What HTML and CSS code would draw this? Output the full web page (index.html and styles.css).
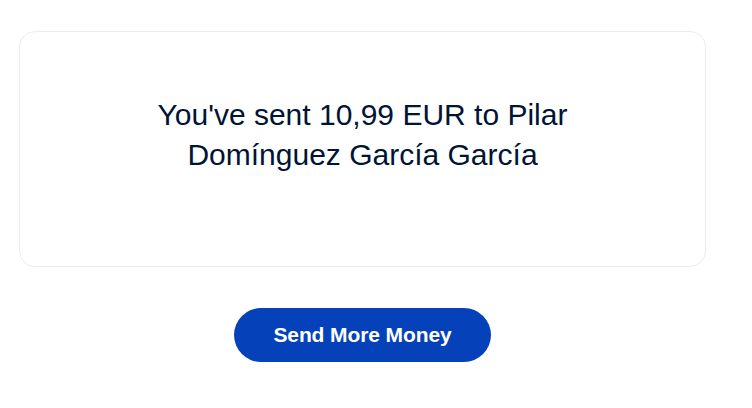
FILE: index.html
```html
<!DOCTYPE html>
<html>
<head>
<meta charset="utf-8">
<link rel="stylesheet" href="styles.css">
</head>
<body>
<main class="page">
  <section class="card">
    <p class="message">You've sent 10,99 EUR to Pilar Domínguez García García</p>
  </section>
  <div class="actions">
    <button class="btn-primary">Send More Money</button>
  </div>
</main>
</body>
</html>
```

FILE: styles.css
```css
html, body {
  margin: 0;
  padding: 0;
  background: #ffffff;
}
body {
  font-family: "Liberation Sans", Arial, sans-serif;
  color: #001435;
}
.page {
  width: 687px;
  margin-left: 19px;
  padding-top: 31px;
  display: flex;
  flex-direction: column;
  align-items: center;
}
.card {
  box-sizing: border-box;
  width: 100%;
  height: 236px;
  border: 1px solid #ededed;
  border-radius: 16px;
  display: flex;
  justify-content: center;
  padding-top: 63px;
}
.message {
  margin: 0;
  width: 460px;
  text-align: center;
  font-size: 30px;
  line-height: 40px;
}
.actions {
  margin-top: 41px;
  display: flex;
  justify-content: center;
}
.btn-primary {
  width: 257px;
  height: 54px;
  border: none;
  border-radius: 27px;
  background: #0541b9;
  color: #ffffff;
  font-family: "Liberation Sans", Arial, sans-serif;
  font-weight: bold;
  font-size: 21px;
  letter-spacing: -0.1px;
  padding: 0;
}
```
